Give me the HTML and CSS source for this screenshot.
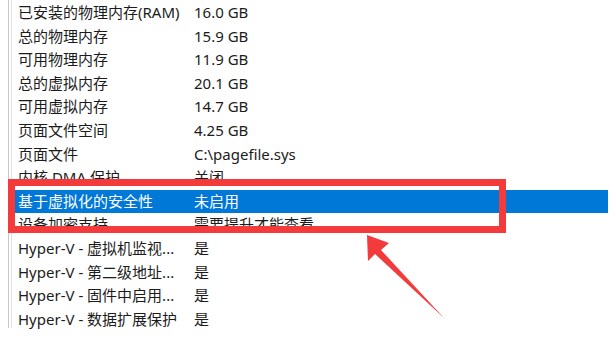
FILE: index.html
```html
<!DOCTYPE html>
<html lang="zh-CN">
<head>
  <meta charset="UTF-8" />
  <title>系统信息</title>
  <link rel="stylesheet" href="styles.css">
</head>
<body>
  <div class="frame">
    <div class="inner">
      <div class="row"><span class="key">已安装的物理内存(RAM)</span><span class="val">16.0 GB</span></div>
      <div class="row"><span class="key">总的物理内存</span><span class="val">15.9 GB</span></div>
      <div class="row"><span class="key">可用物理内存</span><span class="val">11.9 GB</span></div>
      <div class="row"><span class="key">总的虚拟内存</span><span class="val">20.1 GB</span></div>
      <div class="row"><span class="key">可用虚拟内存</span><span class="val">14.7 GB</span></div>
      <div class="row"><span class="key">页面文件空间</span><span class="val">4.25 GB</span></div>
      <div class="row"><span class="key">页面文件</span><span class="val">C:\pagefile.sys</span></div>
      <div class="row"><span class="key">内核 DMA 保护</span><span class="val">关闭</span></div>
      <div class="row selected"><span class="key">基于虚拟化的安全性</span><span class="val">未启用</span></div>
      <div class="row"><span class="key">设备加密支持</span><span class="val">需要提升才能查看</span></div>
      <div class="row"><span class="key">Hyper-V - 虚拟机监视...</span><span class="val">是</span></div>
      <div class="row"><span class="key">Hyper-V - 第二级地址...</span><span class="val">是</span></div>
      <div class="row"><span class="key">Hyper-V - 固件中启用...</span><span class="val">是</span></div>
      <div class="row"><span class="key">Hyper-V - 数据扩展保护</span><span class="val">是</span></div>
    </div>
  </div>

  <!-- annotation drawn over the list -->
  <div class="highlight"></div>
  <svg class="arrow" width="613" height="355" viewBox="0 0 613 355">
    <polygon points="367,235 389,243 381,250 444,318 375,254 368,261" fill="#f33b3b"/>
  </svg>
</body>
</html>
```

FILE: styles.css
```css
* {
  margin: 0;
  padding: 0;
  box-sizing: border-box;
}

body {
  width: 613px;
  height: 355px;
  background: #ffffff;
  color: #1b1b1b;
  font-family: "Noto Sans", "Noto Sans CJK SC", sans-serif;
  font-size: 15px;
  position: relative;
  overflow: hidden;
}

.frame {
  margin-left: 8px;
  height: 328px;
  border-left: 1px solid #c6c6c6;
  padding-left: 2px;
}

.inner {
  height: 100%;
  border-left: 1px solid #e0e0e0;
  padding-top: 1px;
}

.row {
  display: flex;
  height: 23.6px;
  line-height: 23.6px;
  margin-left: 1px;
  padding-left: 5px;
  width: 595px;
  white-space: nowrap;
}

.key {
  width: 176px;
  overflow: hidden;
}

.selected {
  background: #0078d7;
  color: #ffffff;
}

.highlight {
  position: absolute;
  left: 8px;
  top: 179px;
  width: 498px;
  height: 54px;
  border: 7px solid #f33b3b;
}

.arrow {
  position: absolute;
  left: 0;
  top: 0;
}
```
